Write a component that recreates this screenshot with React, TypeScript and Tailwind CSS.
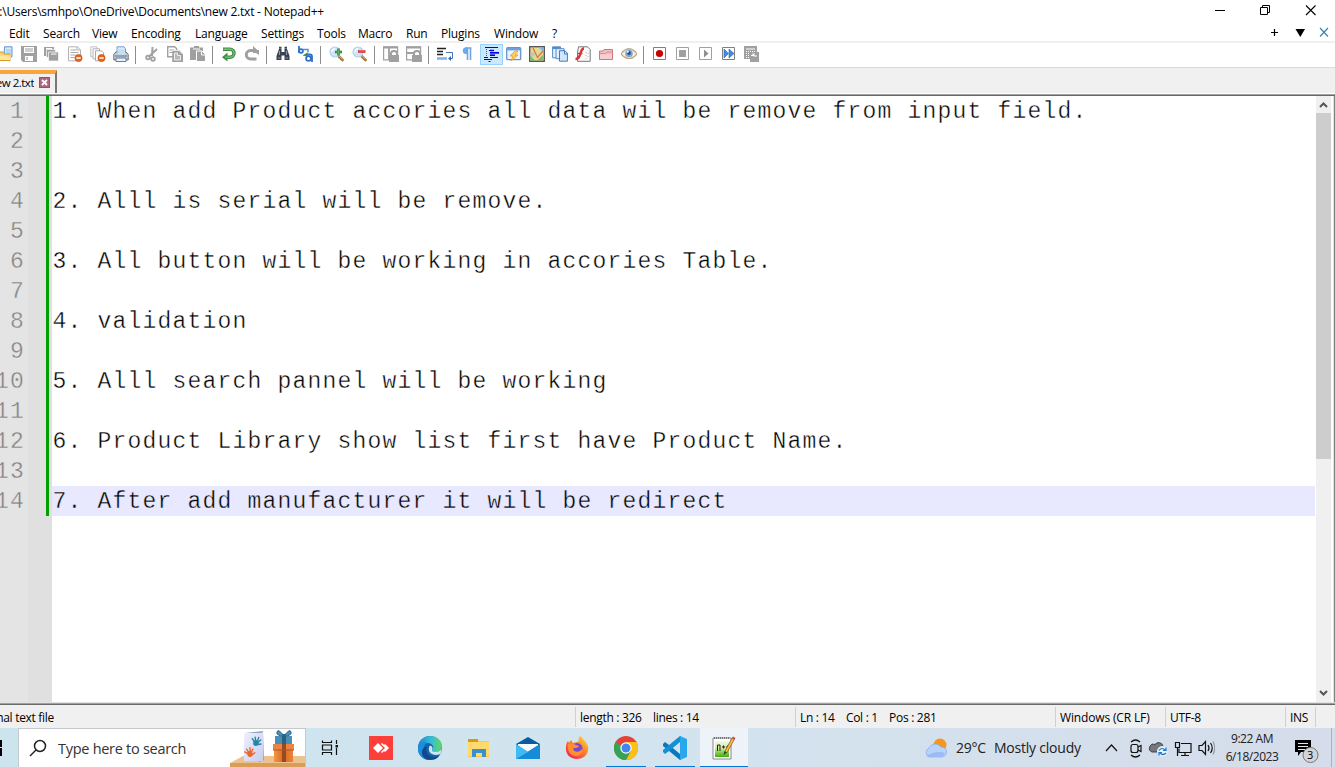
import type { ReactNode } from 'react';

const ui = "font-['Segoe_UI','Open_Sans','Noto_Sans',sans-serif]";

function Ico({ children, on = false }: { children: ReactNode; on?: boolean }) {
  return (
    <div className={`flex h-[21px] w-[23px] shrink-0 items-center justify-center ${on ? 'border border-[#99d1ff] bg-[#cce8ff]' : ''}`}>
      <svg width="16" height="16" viewBox="0 0 16 16" className="mr-px mb-px shrink-0">{children}</svg>
    </div>
  );
}

const Sep = () => (
  <div className="h-[18px] w-2 shrink-0 pl-[2px]"><div className="h-full w-px bg-[#8c8c8c]" /></div>
);

const Minus = () => (
  <g><circle cx="11.5" cy="12" r="3.6" fill="#e8641b" stroke="#b94a0e" strokeWidth=".6" /><path d="M9.3 12h4.4" stroke="#fff" strokeWidth="1.5" /></g>
);

const Lens = () => (
  <g><path d="M9.5 10l4 4" stroke="#a8743c" strokeWidth="2.8" strokeLinecap="round" /><path d="M10 9.8l3.5 3.4" stroke="#e0b67c" strokeWidth="1" /><circle cx="6" cy="6" r="5" fill="#cfe4f8" stroke="#b5d0ec" strokeWidth="1.2" /><path d="M3 6a3 3 0 013-3" stroke="#fff" fill="none" strokeWidth="1.4" /></g>
);

const Lock = () => (
  <g><path d="M6 9h1V7a3.500 3.500 0 013.500-3h1A3.500 3.500 0 0115 7v2h1v7H6z" fill="#a0a0a0" /><path d="M9 9V7.500q0-1.500 2-1.500t2 1.500V9z" fill="#fff" /></g>
);

function Toolbar() {
  return (
    <div className="flex h-6 shrink-0 items-start overflow-hidden pt-px">
      <div className="-ml-[5px] flex items-center">
        <Ico><path d="M6.500.8H14v10H6z" fill="#d8ebfb" stroke="#5b92d0" /><path d="M8 3h5v5H8z" fill="#b4d7f7" /><path d="M-1 6h6l1.500 2H12v6.500H-1z" fill="#f8d173" stroke="#d99a28" /><path d="M0 9.500h13L12 14H0z" fill="#ffe6a0" /></Ico>
        <Ico><path fillRule="evenodd" d="M0 0h16v16H2l-2-2zM3 1v6h10V1zM4 10v5h8v-5z" fill="#a0a0a0" /><path d="M4 3h8M4 5h8M6 11v3" stroke="#a0a0a0" strokeWidth="1.2" /></Ico>
        <Ico><path d="M0 1h10v9H0z" fill="#a0a0a0" /><path d="M2.500 3.500h9v8h-9z" fill="#a0a0a0" stroke="#fff" strokeWidth=".7" /><path d="M4.500 6h10v9h-10z" fill="#a0a0a0" stroke="#fff" strokeWidth=".7" /><path d="M7 8h5.500M2 2.500h6" stroke="#fff" strokeWidth="1" /></Ico>
        <Ico><path d="M1.500.8h9l3 3v11h-12z" fill="#fff" stroke="#b3b3b3" /><path d="M3.500 4h6M3.500 6.500h8M3.500 9h5M3.500 11.500h4" stroke="#aaa" /><path d="M10 1v3h3" stroke="#b3b3b3" fill="none" /><Minus /></Ico>
        <Ico><path d="M.8.8h6v10h-6z" fill="#fff" stroke="#c0c0c0" /><path d="M3 2.800h6.500v10H3z" fill="#fff" stroke="#b3b3b3" /><path d="M5.500 4.800h6l2 2v8h-8z" fill="#fff" stroke="#aaa" /><Minus /></Ico>
        <Ico><path d="M4 .8h7l1.500 2V8H4z" fill="#dceefd" stroke="#6f9ed0" /><path d="M.8 8.500l2-2.500h10.400l2 2.500V14H.8z" fill="#c7ced8" stroke="#66717e" /><path d="M4.500 3v5.500h7.500V3" fill="#c4e0f8" /><path d="M3 12h10v3.500H3z" fill="#e8f4ff" stroke="#5e7fa4" /><path d="M2 10h12" stroke="#66717e" /></Ico>
        <Sep />
        <Ico><path d="M8.500 1l-.5 9M13 3L4.500 11" stroke="#a0a0a0" strokeWidth="2" /><circle cx="4" cy="11.500" r="1.800" fill="none" stroke="#a0a0a0" strokeWidth="1.800" /><circle cx="9" cy="13" r="1.800" fill="none" stroke="#a0a0a0" strokeWidth="1.800" /></Ico>
        <Ico><path d="M.7.7h7l2 2v8h-9z" fill="#fff" stroke="#a0a0a0" strokeWidth="1.400" /><path d="M2.500 4h5M2.500 6.500h5" stroke="#a0a0a0" /><path d="M6 5h6l3.300 3.300v7H6z" fill="#a0a0a0" stroke="#a0a0a0" strokeWidth="1.400" /><path d="M5 4.500h7l3.500 3.500" fill="none" stroke="#fff" strokeWidth=".7" /><path d="M7.500 7h3v2.500h3V14h-6z" fill="#b8b8b8" stroke="#fff" strokeWidth=".8" /></Ico>
        <Ico><path d="M0 1.500h4V0h5v1.500h4V14H0z" fill="#a0a0a0" /><path d="M6.500 5H12l3.500 3.500v7h-9z" fill="#a0a0a0" stroke="#fff" /><path d="M3 3h7" stroke="#fff" /><path d="M11.500 5.500v3.500h3.500" stroke="#fff" fill="none" /></Ico>
        <Sep />
        <Ico><path d="M2 3.200h7a4 4 0 010 8H5" fill="none" stroke="#3d8d43" strokeWidth="3.500" /><path d="M6.500 6.500v9L1 11.200z" fill="#3d8d43" /><path d="M2.500 3.200H9a4 4 0 010 8H4" fill="none" stroke="#79bd70" strokeWidth="1.400" /></Ico>
        <Ico><path d="M12.500 13H6.500a4.200 4.200 0 010-8.400h4" fill="none" stroke="#a0a0a0" strokeWidth="3" /><path d="M9 0l5.500 5H9zM9 4h6v5l-3-2H9z" fill="#a0a0a0" /></Ico>
        <Sep />
        <Ico><path d="M4 3h2.500v3h3V3H12l2.500 7v4h-5V9.500h-3V14h-5v-4z" fill="#39424e" /><path d="M4 1.800h2.500M9.500 1.800H12" stroke="#39424e" strokeWidth="2" /><path d="M4.500 5v4M11.500 5v4M3 12h2.500M10.500 12H13" stroke="#8e9caf" strokeWidth="1.200" /></Ico>
        <Ico><g fill="none" stroke="#2f6fc9" strokeWidth="1.800"><path d="M1 0v7" /><circle cx="3" cy="5" r="1.900" /><circle cx="10.500" cy="12.500" r="2.400" /><path d="M8 8.500h4q2 0 2 2V16" /></g><path d="M5 3.500h5v3" stroke="#5d94ca" strokeWidth="1.500" fill="none" /><path d="M4.500 9.500l5-3v4z" fill="#3b8d50" /></Ico>
        <Sep />
        <Ico><Lens /><path d="M9.500 2.500v7M6 6h7" stroke="#2d8a38" strokeWidth="2.500" /><path d="M9.500 3.500v5M7 6h5" stroke="#68b765" strokeWidth=".8" /></Ico>
        <Ico><Lens /><path d="M6 5.500h7.500" stroke="#cf3838" strokeWidth="2.700" /><path d="M7 5h5.500" stroke="#ff8585" strokeWidth=".8" /></Ico>
        <Sep />
        <Ico><path d="M.6.8h14v13H.6z" fill="#fff" stroke="#a0a0a0" strokeWidth="1.200" /><path d="M0 1.500h15M6 2v12" stroke="#a0a0a0" strokeWidth="1.800" /><Lock /></Ico>
        <Ico><path d="M.6.8h14v13H.6z" fill="#fff" stroke="#a0a0a0" strokeWidth="1.200" /><path d="M0 1.500h15M0 7h15" stroke="#a0a0a0" strokeWidth="1.800" /><Lock /></Ico>
        <Sep />
        <Ico><path d="M0 2.500h9M0 5.500h6M0 8.500h6" stroke="#222" strokeWidth="1.300" /><path d="M0 12.500h10" stroke="#82b2ee" strokeWidth="2.600" /><path d="M9 6.500h6.500v6H13" fill="none" stroke="#4275b9" /><path d="M14 10v5l-3-2.500z" fill="#3569b1" /></Ico>
        <Ico><path d="M5 2h6.500M7.500 2v12M10.500 2v12" stroke="#6aa5ea" strokeWidth="1.600" /><path d="M7 1.500H6A3.200 3.200 0 006 8h1z" fill="#6fa8ef" /></Ico>
        <Ico on><path d="M2 1.500h13M6 4.500h5M7 6.800h9M7 9.200h5M1 11.500h4M7 11.500h8M1 13.500h8M5.500 15.500h2" stroke="#0000e0" strokeWidth="1" /><path d="M7 4.500h4M7 6.800h9M7 9.200h5" stroke="#0000e0" strokeWidth="1.600" /><path d="M3.500 3v8" stroke="#e02020" strokeDasharray="1 1" /></Ico>
        <Ico><rect x=".7" y="1.700" width="14" height="12" rx="1" fill="#e9f2fd" stroke="#6794ce" strokeWidth="1.300" /><path d="M1 3.200h13.500" stroke="#719fdb" strokeWidth="2.400" /><path d="M9 5L4 10h3l-2 5 7-6H9l3-4z" fill="#ffd257" stroke="#ec9a27" strokeWidth=".8" /></Ico>
        <Ico><rect x=".7" y=".7" width="14.600" height="14.600" fill="#e0d997" stroke="#505050" strokeWidth="1.300" /><path d="M1.500 10l5 5h-5z" fill="#77b96d" /><path d="M10 1.500h4.500v5z" fill="#86b7d9" /><path d="M1.500 6l5 2-3 3-2-1z" fill="#bcc8b4" /><path d="M4 2l4.500 9.500L14 5" stroke="#e07040" strokeWidth="1.200" fill="none" /><path d="M8 14.500l6-5.500v5.500z" fill="#8cb56b" /></Ico>
        <Ico><path d="M.6.8h8v11h-8z" fill="#e3f0ff" stroke="#558acb" /><path d="M.6 2h8" stroke="#558acb" strokeWidth="2" /><path d="M4 2.700h8v10H4z" fill="#e3f0ff" stroke="#558acb" /><path d="M7.500 4.700H13l2.400 2.500v8H7.500z" fill="#d1e6fe" stroke="#407ac1" /><path d="M12.500 5v3h3" fill="none" stroke="#407ac1" /></Ico>
        <Ico><path d="M3.500.8h9l2.700 2.700v11.800H2.500V7z" fill="#fafafa" stroke="#777" /><path d="M9 2.500C5.500 2.500 6.500 7 4.500 10c-1 2.500-2 3-4 3" fill="none" stroke="#d83338" strokeWidth="2.400" /><path d="M3 7.500h4.500" stroke="#d83338" strokeWidth="1.300" /><path d="M11 6v7M13 7v6" stroke="#bbb" strokeDasharray="1 2" /></Ico>
        <Ico><path d="M1.500 13.500V5H5l1-1.500h8.500v10z" fill="#f2c1c4" stroke="#ce777c" /><path d="M1.500 7.500h6L9 6h5.500" fill="none" stroke="#dd8a8e" /><path d="M2 8.500h12V13H2z" fill="#f6cfd0" /></Ico>
        <Ico><path d="M0 8q8-10 16 0-8 9-16 0z" fill="#f6f1e8" stroke="#c9a37c" strokeWidth="1.200" /><path d="M1 6q7-7 14 0" fill="none" stroke="#adadad" /><circle cx="8" cy="7.500" r="3.800" fill="#7ea8ce" /><circle cx="8" cy="7" r="1.900" fill="#294f79" /><circle cx="6.800" cy="5.800" r="1" fill="#fff" /></Ico>
        <Sep />
        <div className="-ml-px flex">
          <Ico><path d="M2.500 1.500h12v12h-12z" fill="#fff" stroke="#808080" /><circle cx="8.500" cy="7.500" r="3.600" fill="#c80000" /></Ico>
          <Ico><path d="M2.500 1.500h12v12h-12z" fill="#fff" stroke="#a0a0a0" /><path d="M5 4h7v7H5z" fill="#a0a0a0" /></Ico>
          <Ico><path d="M2.500 1.500h12v12h-12z" fill="#fff" stroke="#a0a0a0" /><path d="M7 3.500v8l4.500-4z" fill="#909090" /></Ico>
          <Ico><path d="M2.500 1.500h12v12h-12z" fill="#fff" stroke="#808080" /><path d="M4 3v9l4.500-4.500zM9 3v9l5-4.500z" fill="#438be0" stroke="#2465b8" strokeWidth=".6" /></Ico>
          <Ico><path d="M1 0h13v13H1z" fill="#a0a0a0" /><path d="M7 6h9v10H7z" fill="#a0a0a0" /><path d="M3 3h9" stroke="#fff" /><path d="M3 5.500h9M3 7.500h4M3 9.500h4M3 11.500h3" stroke="#fff" strokeDasharray="1 1" /><path d="M8 9.500h2V8h1v2h3" stroke="#fff" strokeWidth="1.200" fill="none" /></Ico>
        </div>
      </div>
    </div>
  );
}

const menu: [string, string][] = [
  ['Edit', 'w-[34px]'], ['Search', 'w-[49px]'], ['View', 'w-[39px]'], ['Encoding', 'w-[64px]'],
  ['Language', 'w-[66px]'], ['Settings', 'w-[56px]'], ['Tools', 'w-[41px]'], ['Macro', 'w-[48px]'],
  ['Run', 'w-[35px]'], ['Plugins', 'w-[53px]'], ['Window', 'w-[58px]'], ['?', 'w-5'],
];

const lines = [
  '1. When add Product accories all data wil be remove from input field.', '', '',
  '2. Alll is serial will be remove.', '', '3. All button will be working in accories Table.', '',
  '4. validation', '', '5. Alll search pannel will be working', '',
  '6. Product Library show list first have Product Name.', '', '7. After add manufacturer it will be redirect',
];

function Titles() {
  return (
    <>
      <div className="flex h-6 shrink-0 justify-between">
        <div className="flex w-[324px] items-center justify-end text-[12px] tracking-[-0.22px] whitespace-nowrap">:\Users\smhpo\OneDrive\Documents\new 2.txt - Notepad++</div>
        <svg width="135" height="24" fill="none" stroke="#000">
          <path d="M15 10.500h10M60.500 7.500h7v7h-7zM62.500 7v-1.500h7v7h-1.500" /><path d="M106 5.500l9.500 9.500m0-9.500l-9.500 9.500" strokeWidth="1.100" />
        </svg>
      </div>
      <div className="flex h-[17px] shrink-0 items-center justify-between pl-[9px] text-[12px] tracking-[-0.2px]">
        <div className="flex pt-[2px]">{menu.map(([m, w]) => <span key={m} className={`${w} whitespace-nowrap`}>{m}</span>)}</div>
        <svg width="75" height="17" fill="none">
          <path d="M11 8.500h7M14.500 5v7" stroke="#000" strokeWidth="1.200" /><path d="M35.500 5h9.500l-4.700 8z" fill="#000" /><path d="M60 4l8 8.500m0-8.500l-8 8.500" stroke="#3c82b0" strokeWidth="1.200" />
        </svg>
      </div>
    </>
  );
}

function Editor() {
  return (
    <div className="flex h-[606px] shrink-0 bg-white font-['Courier_New','Liberation_Mono',monospace] text-[23px] leading-[33px] tracking-[1.198px]">
      <div className="flex w-7 shrink-0 flex-col items-end overflow-hidden bg-[#e4e4e4] pr-[3px] text-[#808080] [-webkit-text-stroke:0.4px_#e4e4e4]">
        {lines.map((_, i) => <div key={i} className="h-[30px]">{i + 1}</div>)}
      </div>
      <div className="w-6 shrink-0 bg-[#e0e0e0] pl-[18px]"><div className="h-[420px] w-[3px] bg-[#00a000]" /></div>
      <div className="w-[1263px] shrink-0 whitespace-pre text-black">
        {lines.map((l, i) => <div key={i} className={`h-[30px] pl-[0.5px] ${i === 13 ? 'bg-[#e8e8ff] [-webkit-text-stroke:0.4px_#e8e8ff]' : '[-webkit-text-stroke:0.4px_#fff]'}`}>{l}</div>)}
      </div>
      <div className="ml-px flex w-[15px] shrink-0 flex-col bg-[#f0f0f0]">
        <svg width="15" height="17" fill="none" stroke="#555" strokeWidth="2"><path d="M4 11l3.500-3.500L11 11" /></svg>
        <div className="h-[346px] bg-[#cdcdcd]" />
        <svg width="15" height="17" fill="none" stroke="#555" strokeWidth="2" className="mt-auto"><path d="M4 6l3.500 3.500L11 6" /></svg>
      </div>
      <div className="w-[3px] border-r border-[#e3e3e3] bg-white" />
      <div className="w-px bg-[#808080]" />
    </div>
  );
}

function Status() {
  const cell = 'h-5 shrink-0 border-l border-[#d0d0d0] pl-1 whitespace-pre';
  return (
    <div className="flex h-[23px] shrink-0 items-center overflow-hidden bg-[#f0f0f0] text-[12px] leading-[22px] tracking-[-0.3px]">
      <div className="flex h-5 w-[575px] shrink-0"><div className="flex h-[22px] w-[54px] justify-end overflow-hidden whitespace-nowrap">Normal text file</div></div>
      <div className={`${cell} w-[220px]`}>length : 326    lines : 14</div>
      <div className={`${cell} w-[260px]`}>Ln : 14    Col : 1    Pos : 281</div>
      <div className={`${cell} w-[110px] tracking-[-0.15px]`}>Windows (CR LF)</div>
      <div className={`${cell} w-[120px]`}>UTF-8</div>
      <div className={`${cell} w-[30px]`}>INS</div>
      <div className={cell} />
    </div>
  );
}

function App24({ children }: { children: ReactNode }) {
  return <div className="flex h-[39px] w-[49px] shrink-0 items-center justify-center"><svg width="24" height="24" viewBox="0 0 24 24">{children}</svg></div>;
}

function Running({ children, active = false }: { children: ReactNode; active?: boolean }) {
  return (
    <div className={`flex h-[39px] shrink-0 flex-col items-center ${active ? 'ml-px w-12 bg-[#edf3f8]' : 'w-[49px]'}`}>
      <div className="flex h-[38px] items-center pt-[2px]"><svg width="24" height="24" viewBox="0 0 24 24">{children}</svg></div>
      <div className={`h-px ${active ? 'w-12' : 'w-10'} bg-[#0078d7]`} />
    </div>
  );
}

const Hand = ({ x, y, r, c }: { x: number; y: number; r: number; c: string }) => (
  <g transform={`translate(${x} ${y}) rotate(${r})`} stroke={c} strokeLinecap="round" fill="none">
    <ellipse cx="0" cy="0" rx="2.800" ry="3" fill={c} stroke="none" /><path d="M-2-1l-2.500-2.500M-1-2.500l-1-3M1-2.500l.5-3.500M2-1.500l2-2.500M2.500 1l2.500-1" strokeWidth="1.400" />
  </g>
);

function Taskbar() {
  return (
    <div className="flex h-[39px] shrink-0 overflow-hidden bg-linear-to-r from-[#cbe4ee] via-[#d3e4ef] to-[#d5dcea]">
      <svg width="18" height="39" className="shrink-0"><path d="M0 12h2v7H0zM0 20h2v8H0z" fill="#000" /></svg>
      <div className="flex w-72 shrink-0 items-center border border-b-0 border-[#c2c8cb] bg-white">
        <svg width="39" height="38" fill="none" stroke="#222" strokeWidth="1.500"><circle cx="21" cy="17" r="5.500" /><path d="M17 21l-6 6" /></svg>
        <span className="w-[172px] pt-[2px] text-[14.500px] tracking-[-0.28px] whitespace-nowrap text-[#333]">Type here to search</span>
        <svg width="75" height="38" viewBox="0 0 75 38">
          <defs>
            <linearGradient id="card" x2="1" y2="1"><stop stopColor="#eef1ff" /><stop offset="1" stopColor="#c9cdf0" /></linearGradient>
            <linearGradient id="box"><stop stopColor="#f39546" /><stop offset=".5" stopColor="#dc681e" /><stop offset="1" stopColor="#ec843c" /></linearGradient>
          </defs>
          <path d="M0 34l13-7h62v7H0z" fill="#edc38d" /><path d="M0 34h75v4H0z" fill="#d99d58" />
          <path d="M15 4l18-2 1 29-5 2z" fill="#93a6bd" /><path d="M14 4h17l2-1v29H14z" fill="url(#card)" />
          <Hand x={26} y={14} r={12} c="#2488a5" /><Hand x={20} y={25} r={-15} c="#ec692b" />
          <path d="M45 7h17v12H45z" fill="#4b8eb6" /><path d="M52 5h4v14h-4z" fill="#286184" /><path d="M54 7q-6-8-7-4t7 4q6-8 7-4t-7 4z" fill="#4b8eb6" stroke="#286184" />
          <path d="M43 15h21v6H43z" fill="#ed8340" /><path d="M44 20h19v13H44z" fill="url(#box)" /><path d="M52 15h4v18h-4z" fill="#934b25" /><path d="M43 21h21" stroke="#b65722" />
        </svg>
      </div>
      <div className="flex w-[50px] shrink-0 items-center pl-[15px]">
        <svg width="18" height="18" fill="none" stroke="#111" strokeWidth="1.200"><path d="M1.500 1.500v2h9v-2M1.500 16v-2.500h9V16M1.500 6h9v5h-9zM15.500 1v4M15.500 9v7" /><path d="M14.500 6h2.500v2.500h-2.500z" fill="#111" stroke="none" /></svg>
      </div>
      <App24><path d="M0 0h24v24H0z" fill="#fc3f39" /><path d="M4 12l5-5 5 5-5 5z" fill="#fff" /><path d="M12.500 7.500L17 12l-4.500 4.500M15.500 8.500L19 12l-3.500 3.500" fill="none" stroke="#fff" strokeWidth="1.500" /></App24>
      <App24>
        <defs><linearGradient id="edge" x2="1"><stop stopColor="#1688d3" /><stop offset=".55" stopColor="#35bdd7" /><stop offset="1" stopColor="#62d85c" /></linearGradient></defs>
        <circle cx="12" cy="12" r="12" fill="#1263b1" /><path d="M0 11C1 4 6 0 12 0c7 0 12 5 12 10 0 4-3 6-6 6-4 0-5-1-4-2 3-3 0-7-4-7-5 0-9 3-10 7z" fill="url(#edge)" />
        <path d="M0 11c1-4 5-6 9-5-4 3-5 13 3 18C4 24-1 18 0 11z" fill="#1b8dd9" /><path d="M9 11c-3 5 3 13 12 9-4 6-17 5-17-3 0-5 3-7 5-6z" fill="#114a8b" />
        <path d="M11.500 10c2-1 4 2 2.500 4-.5 1 1 2 4 2 2 0 4-1 6-3l-1.500 5q-6 2-9.500-.5-3.500-3-1.500-7.500z" fill="#d0e5ef" />
      </App24>
      <App24><path d="M1 3h9l2 2h10v16H1z" fill="#f7c84d" /><path d="M1 3h10v3H1z" fill="#d69a17" /><path d="M1 6h21v14H1z" fill="#ffd969" /><path d="M5 21v-8h14v8h-4v-4H9v4z" fill="#3b8fce" /></App24>
      <App24><path d="M0 8l12-7 12 7v4H0z" fill="#075ba3" /><path d="M2 8h20v10H2z" fill="#f8f9fb" /><path d="M0 8l12 8L24 8v15H0z" fill="#23a4e8" /><path d="M0 23l24-15v15z" fill="#168bd7" /><path d="M0 8l12 8-12 7z" fill="#3ebbf2" /></App24>
      <App24>
        <defs><linearGradient id="ff" x1="1" y1="0" x2=".2" y2="1"><stop stopColor="#ffe64a" /><stop offset=".45" stopColor="#ff8b22" /><stop offset="1" stopColor="#ef245e" /></linearGradient></defs>
        <path d="M15 0c2 1 3 3 4 4 3 3 5 6 4 11-1 5-6 8-11 8C5 23 0 18 1 11c0-3 1-5 2-6l1 2 2-3 2 3c3-1 5-1 6-2-1-2 0-4 1-5z" fill="url(#ff)" /><circle cx="12" cy="12.500" r="5.500" fill="#7548d5" /><path d="M3 8c4-1 6 0 8 1l3 1c-2 3-5 1-6 3 2 4 7 3 9 0 1 4-2 7-6 7-6 0-9-6-8-12z" fill="#ff902d" />
      </App24>
      <Running>
        <circle cx="12" cy="12" r="12" fill="#e64235" /><path d="M1.600 6A12 12 0 0012 24l5-9-5-3z" fill="#34a353" /><path d="M12 24A12 12 0 0022.400 6H12l5 9z" fill="#fbc116" /><circle cx="12" cy="12" r="5.700" fill="#fff" /><circle cx="12" cy="12" r="4.500" fill="#4285ee" />
      </Running>
      <Running>
        <path d="M0 8l2-2 16 12v6h-1L0 10z" fill="#0879bd" /><path d="M0 16l2 2L18 6V0h-1L0 14z" fill="#168fd4" /><path d="M17 0l7 3v18l-7 3z" fill="#29a7ee" /><path d="M17 6v12l-7-6z" fill="#d3e4ef" />
      </Running>
      <Running active>
        <defs><linearGradient id="npp" x2="0" y2="1"><stop stopColor="#f4f7ee" /><stop offset=".45" stopColor="#cdeb9a" /><stop offset="1" stopColor="#3fae0e" /></linearGradient></defs>
        <path d="M1 2h18v21H1z" fill="#fff" stroke="#888" /><path d="M3 5h14v16H3z" fill="url(#npp)" /><path d="M2 2h16" stroke="#777" strokeDasharray="1 1" strokeWidth="2" /><path d="M5.500 15V9h2.500v6M10 11h3M14 11h3M11.500 9.500v3M15.500 9.500v3" stroke="#222" fill="none" strokeWidth="1" /><path d="M21.500 2L14 16" stroke="#855a26" strokeWidth="3.300" /><path d="M21.500 2L14 16" stroke="#f3b846" strokeWidth="2" /><path d="M12.500 15l-1 4 3.500-2.500z" fill="#333" /><path d="M20.500 1.500l2.500 1.300" stroke="#d6483e" strokeWidth="2" />
      </Running>
      <div className="flex flex-1 items-center pl-[175px] text-[14px] tracking-[-0.22px] text-[#202020]">
        <svg width="25" height="22" className="shrink-0"><circle cx="17" cy="8" r="6.500" fill="#f69520" /><path d="M6 20a5 5 0 010-9 7 7 0 0112-1 5 5 0 011 10z" fill="#b9d2fb" stroke="#84a8e8" strokeWidth=".7" /><path d="M3 19q10-6 19-3l-2 3.500H5z" fill="#89aff0" opacity=".65" /></svg>
        <span className="ml-[8px] w-[38px] shrink-0 whitespace-nowrap">29°C</span>
        <span className="w-[109px] shrink-0 whitespace-nowrap">Mostly cloudy</span>
        <svg width="112" height="30" className="shrink-0" fill="none" stroke="#111" strokeWidth="1.200">
          <path d="M3 18l5.500-6 5.500 6" /><path d="M28 9q4.500-4 9 0M28 22q4.500 4 9 0" /><rect x="28" y="11.500" width="7" height="8" rx="2" /><path d="M35 14l3-1.500v6L35 17" />
          <path d="M52 19h8v-6a4.500 4.500 0 00-8-1.500 4 4 0 00-3 7.500z" fill="#74777b" stroke="#333" strokeWidth=".9" /><circle cx="59.500" cy="18.500" r="5" fill="#eaf4fd" stroke="#dce6ee" /><path d="M56 17.500q3-4 6.500 0M63 14.500v3h-3M63 20q-3 3-6 0M56 22.500v-3h3" stroke="#1678cf" />
          <path d="M78 10.500h10v9H76v-4M82 19v3M78 22.500h8M72.500 9.500h4v5h-4zM74.500 14v9" />
          <path d="M96 12.500h3l3.500-4v13l-3.500-4h-3z" /><path d="M105 12q2 3 0 6M107.500 10q3.500 5 0 10" /><path d="M110 8.500q3.500 6.500 0 13" stroke="#989da5" />
        </svg>
      </div>
      <div className="flex w-[62px] shrink-0 flex-col items-center pt-[2px] pl-[2px] text-[12px] leading-[18px] tracking-[-0.46px] whitespace-nowrap text-[#202020]"><span>9:22 AM</span><span>6/18/2023</span></div>
      <div className="relative w-[53px] shrink-0">
        <svg width="53" height="39"><path d="M13 12h16v12H19l-3 4v-4h-3z" fill="#000" /><path d="M16 15.500h10M16 18.500h10M16 21.500h7" stroke="#e1e8f0" /><circle cx="28.500" cy="27" r="7.500" fill="#d1d5da" stroke="#777" /><path d="M49.500 0v39" stroke="#a8b1bd" /></svg>
        <span className="absolute top-[19px] left-[25px] text-[11px] leading-4 text-black">3</span>
      </div>
    </div>
  );
}

export default function App() {
  return (
    <div className={`flex h-[767px] w-[1335px] flex-col overflow-hidden bg-white text-black ${ui}`}>
      <Titles />
      <div className="h-[2px] shrink-0 bg-[#f0f0f0]" />
      <Toolbar />
      <div className="h-px shrink-0 bg-[#dadada]" />
      <div className="flex h-[25px] shrink-0 items-end bg-[#f0f0f0]">
        <div className="flex h-[23px] w-[57px] items-center border-t-4 border-r-2 border-t-[#faa53a] border-r-[#777] text-[11.500px] tracking-[-0.5px]">
          <div className="-mt-[2px] flex w-[34px] shrink-0 justify-end overflow-hidden whitespace-nowrap">new 2.txt</div>
          <svg width="11" height="11" className="-mt-[2px] ml-[5px] shrink-0"><path d="M0 0h11v11H0z" fill="#b06583" /><path d="M.5.500h10v10H.5z" fill="none" stroke="#95506c" /><path d="M3 3l5 5m0-5L3 8" stroke="#fff" strokeWidth="1.800" /></svg>
        </div>
      </div>
      <div className="h-px shrink-0 bg-white" />
      <div className="h-px shrink-0 bg-[#a0a0a0]" />
      <div className="h-px shrink-0 bg-[#696969]" />
      <Editor />
      <div className="h-px shrink-0 bg-[#e3e3e3]" />
      <div className="h-px shrink-0 bg-[#a0a0a0]" />
      <div className="h-px shrink-0 bg-[#696969]" />
      <Status />
      <Taskbar />
    </div>
  );
}
